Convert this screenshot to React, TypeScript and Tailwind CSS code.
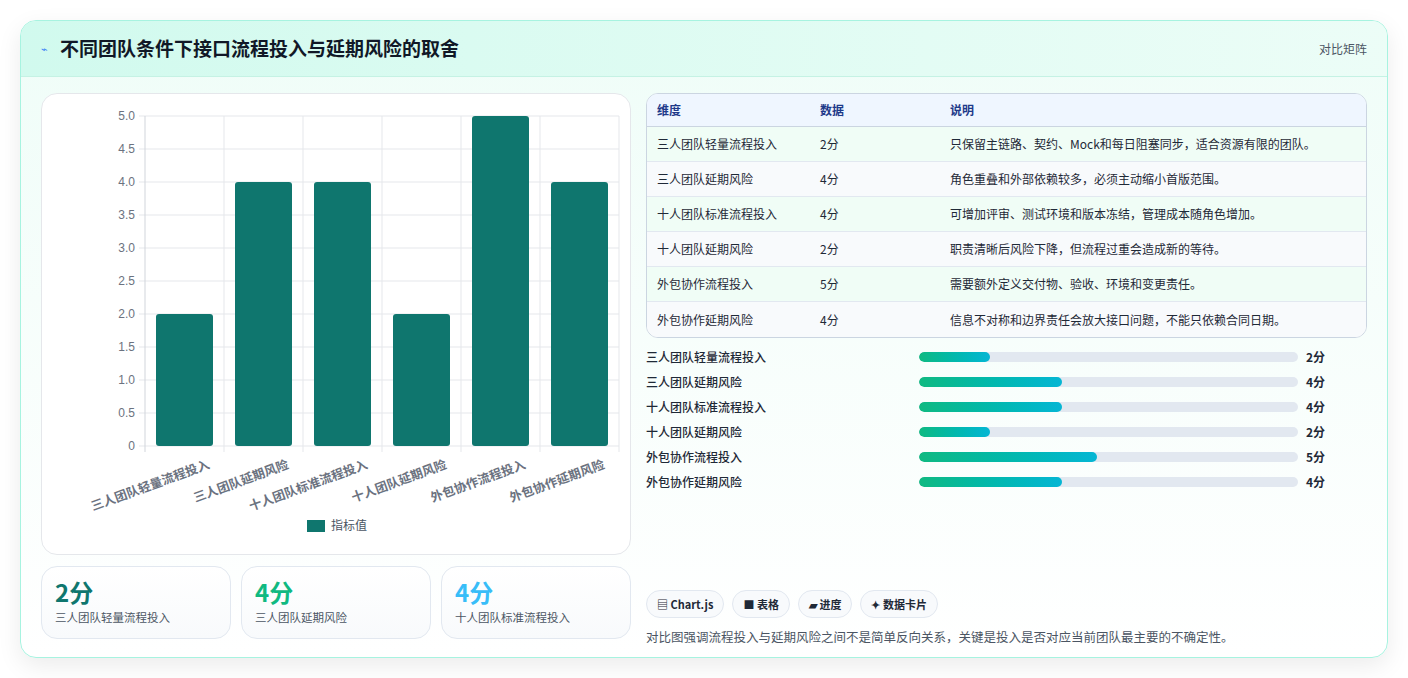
import React from "react";

const rows = [
  ["三人团队轻量流程投入", 2, "只保留主链路、契约、Mock和每日阻塞同步，适合资源有限的团队。"],
  ["三人团队延期风险", 4, "角色重叠和外部依赖较多，必须主动缩小首版范围。"],
  ["十人团队标准流程投入", 4, "可增加评审、测试环境和版本冻结，管理成本随角色增加。"],
  ["十人团队延期风险", 2, "职责清晰后风险下降，但流程过重会造成新的等待。"],
  ["外包协作流程投入", 5, "需要额外定义交付物、验收、环境和变更责任。"],
  ["外包协作延期风险", 4, "信息不对称和边界责任会放大接口问题，不能只依赖合同日期。"],
] as const;

function Chart() {
  const x0 = 103, x1 = 577, top = 22, bot = 352;
  const w = (x1 - x0) / 6;
  const yv = (v: number) => bot - (v / 5) * (bot - top);
  const ticks = [0, 0.5, 1, 1.5, 2, 2.5, 3, 3.5, 4, 4.5, 5];
  return (
    <svg width="590" height="461" style={{ fontFamily: "'Liberation Sans','Noto Sans CJK SC',sans-serif" }}>
      {ticks.map((t) => (
        <g key={t}>
          <line x1={x0 - 6} x2={x1} y1={yv(t)} y2={yv(t)} stroke="#e5e7eb" />
          <text x={x0 - 10} y={yv(t) + 4} textAnchor="end" fontSize="12" fill="#6b7280">{t === 0 ? "0" : t.toFixed(1)}</text>
        </g>
      ))}
      {Array.from({ length: 7 }).map((_, i) => (
        <line key={i} x1={x0 + i * w} x2={x0 + i * w} y1={top} y2={bot + 6} stroke={i === 0 ? "#d1d5db" : "#e5e7eb"} />
      ))}
      {rows.map((r, i) => {
        const cx = x0 + i * w + w / 2;
        return (
          <g key={i}>
            <rect x={cx - 28.5} y={yv(r[1])} width="57" height={bot - yv(r[1])} rx="3" fill="#0f766e" />
            <text x={cx + 26} y={bot + 22} textAnchor="end" fontSize="12.5" fontWeight="bold" fill="#6b7280" fontFamily="'Noto Sans CJK SC',sans-serif" transform={`rotate(-20 ${cx + 26} ${bot + 22})`}>{r[0]}</text>
          </g>
        );
      })}
      <rect x="265" y="426" width="18" height="12" fill="#0f766e" />
      <text x="289" y="436" fontSize="12" fill="#4b5563" fontFamily="'Noto Sans CJK SC',sans-serif">指标值</text>
    </svg>
  );
}

export default function App() {
  return (
    <div className="w-[1408px] h-[678px] bg-white p-5" style={{ fontFamily: "'Noto Sans CJK SC','Liberation Sans',sans-serif" }}>
      <div className="h-[638px] rounded-2xl border border-[#a7f3e0] bg-gradient-to-b from-[#effdf8] to-white shadow-[0_8px_24px_rgba(0,0,0,0.08)] overflow-hidden flex flex-col">
        <div className="h-[56px] shrink-0 flex items-center justify-between px-5 bg-gradient-to-r from-[#d1faee] to-[#ecfdf7] border-b border-[#c5f2e4]">
          <div className="flex items-center gap-3">
            <span className="text-[#3b82f6] text-[11px]">⌁</span>
            <span className="text-[19px] font-bold text-[#111827]">不同团队条件下接口流程投入与延期风险的取舍</span>
          </div>
          <span className="text-[12px] text-[#4b5563]">对比矩阵</span>
        </div>
        <div className="flex gap-[15px] px-5 pt-4">
          <div className="w-[590px] flex flex-col gap-[11px]">
            <div className="h-[462px] bg-white rounded-2xl border border-[#e5e7eb]">
              <Chart />
            </div>
            <div className="flex gap-[10px]">
              {[["2分", "text-[#0f766e]", "三人团队轻量流程投入"], ["4分", "text-[#10b981]", "三人团队延期风险"], ["4分", "text-[#38bdf8]", "十人团队标准流程投入"]].map(([v, c, l]) => (
                <div key={l} className="w-[190px] h-[73px] rounded-2xl border border-[#e2e8f0] bg-gradient-to-b from-white to-[#f8fafc] px-[13px] pt-[9px]">
                  <div className={`text-[24px] font-bold leading-[32px] ${c}`}>{v}</div>
                  <div className="text-[11.5px] text-[#4b5563] mt-[1px]">{l}</div>
                </div>
              ))}
            </div>
          </div>
          <div className="flex-1 flex flex-col">
            <div className="rounded-xl border border-[#cbd5e1] overflow-hidden bg-white">
              <div className="h-[33px] flex items-center bg-[#eff6ff] border-b border-[#cbd5e1] text-[12px] font-bold text-[#1e3a8a]">
                <div className="w-[173px] pl-[10px]">维度</div><div className="w-[130px]">数据</div><div>说明</div>
              </div>
              {rows.map((r, i) => (
                <div key={i} className={`h-[35px] flex items-center text-[12px] text-[#1f2937] ${i < 5 ? "border-b border-[#e2e8f0]" : ""} ${i % 2 === 0 ? "bg-[#f0fdf6]" : "bg-[#f8fafc]"}`}>
                  <div className="w-[173px] pl-[10px]">{r[0]}</div><div className="w-[130px]">{r[1]}分</div><div>{r[2]}</div>
                </div>
              ))}
            </div>
            <div className="flex flex-col gap-[7px] mt-[10px]">
              {rows.map((r, i) => (
                <div key={i} className="h-[18px] flex items-center text-[12px] text-[#1f2937] font-medium">
                  <div className="w-[273px]">{r[0]}</div>
                  <div className="w-[379px] h-[10px] rounded-full bg-[#e2e8f0] overflow-hidden">
                    <div className="h-full rounded-full bg-gradient-to-r from-[#10b981] to-[#06b6d4]" style={{ width: `${r[1] * 9.4}%` }} />
                  </div>
                  <div className="ml-2 font-bold">{r[1]}分</div>
                </div>
              ))}
            </div>
            <div className="flex gap-[8px] mt-[99px]">
              {["▤ Chart.js", "■ 表格", "▰ 进度", "✦ 数据卡片"].map((t) => (
                <div key={t} className="h-[28px] px-[10px] rounded-full border border-[#e2e8f0] bg-[#f8fafc] flex items-center text-[11px] font-bold text-[#1f2937]">{t}</div>
              ))}
            </div>
            <div className="mt-[10px] text-[12.5px] text-[#4b5563]">对比图强调流程投入与延期风险之间不是简单反向关系，关键是投入是否对应当前团队最主要的不确定性。</div>
          </div>
        </div>
      </div>
    </div>
  );
}
